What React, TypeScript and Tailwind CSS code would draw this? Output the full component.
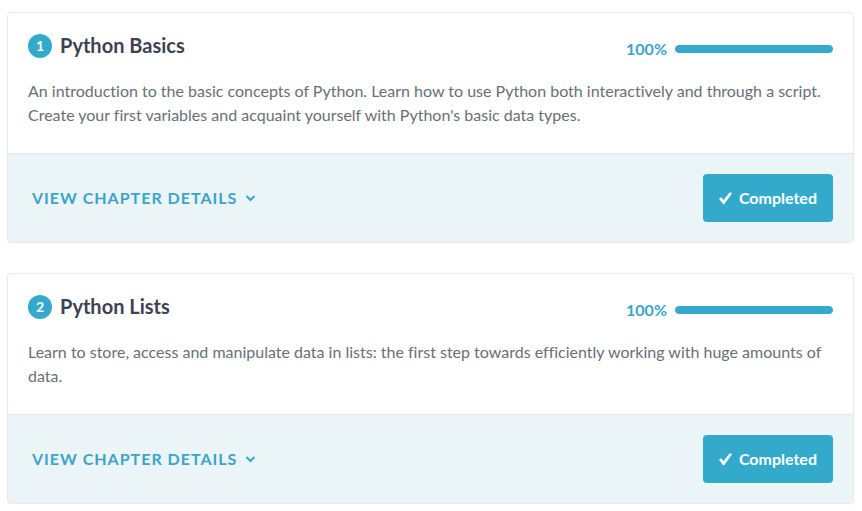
type Chapter = { number: number; title: string; description: string; progress: number };

const chapters: Chapter[] = [
  {
    number: 1,
    title: 'Python Basics',
    description:
      "An introduction to the basic concepts of Python. Learn how to use Python both interactively and through a script. Create your first variables and acquaint yourself with Python's basic data types.",
    progress: 100,
  },
  {
    number: 2,
    title: 'Python Lists',
    description:
      'Learn to store, access and manipulate data in lists: the first step towards efficiently working with huge amounts of data.',
    progress: 100,
  },
];

function ChapterCard({ chapter }: { chapter: Chapter }) {
  return (
    <section className="overflow-hidden rounded-sm border border-[#e6eaeb] bg-white">
      <div className="px-5 pt-[21px] pb-[26px]">
        <header className="flex items-start justify-between">
          <div className="flex items-start gap-2">
            <span className="flex size-6 items-center justify-center rounded-full bg-[#33aacc] text-sm font-bold text-white">
              {chapter.number}
            </span>
            <h2 className="text-xl leading-[22px] font-bold text-[#3d4251]">{chapter.title}</h2>
          </div>
          <div className="flex items-center gap-2 pt-[3px]">
            <span className="text-base leading-6 font-bold text-[#3ba4c9]">{chapter.progress}%</span>
            <div className="h-2 w-[158px] overflow-hidden rounded-full bg-[#e6eaeb]">
              <div className="h-full rounded-full bg-[#33aacc]" style={{ width: `${chapter.progress}%` }} />
            </div>
          </div>
        </header>
        <p className="mt-[18px] text-base leading-6 text-[#686f75] [font-variant-ligatures:none]">{chapter.description}</p>
      </div>
      <footer className="flex items-center justify-between border-t border-[#e0e9eb] bg-[#ebf4f7] px-5 py-5">
        <button type="button" className="flex items-center gap-2 px-1 text-base font-bold tracking-[1px] text-[#3ba4c9] uppercase">
          View chapter details
          <svg className="size-3" viewBox="0 0 12 12" fill="none" stroke="currentColor" strokeWidth="2" aria-hidden="true">
            <path d="M1.5 4l4 4 4-4" />
          </svg>
        </button>
        <button type="button" className="flex h-12 items-center gap-1 rounded-sm bg-[#33aacc] px-4 text-base font-bold text-white">
          <svg className="h-4 w-4" viewBox="0 0 16 16" fill="currentColor" aria-hidden="true">
            <path d="M0 8.7L2 7.2L4.6 10L10.8 2.2L13 3.2L5.2 14.2L4.2 14.2Z" />
          </svg>
          Completed
        </button>
      </footer>
    </section>
  );
}

export default function App() {
  return (
    <main className="flex flex-col gap-[30px] bg-white py-3 pr-2 pl-[7px] font-[Lato,sans-serif]">
      {chapters.map((chapter) => (
        <ChapterCard key={chapter.number} chapter={chapter} />
      ))}
    </main>
  );
}
